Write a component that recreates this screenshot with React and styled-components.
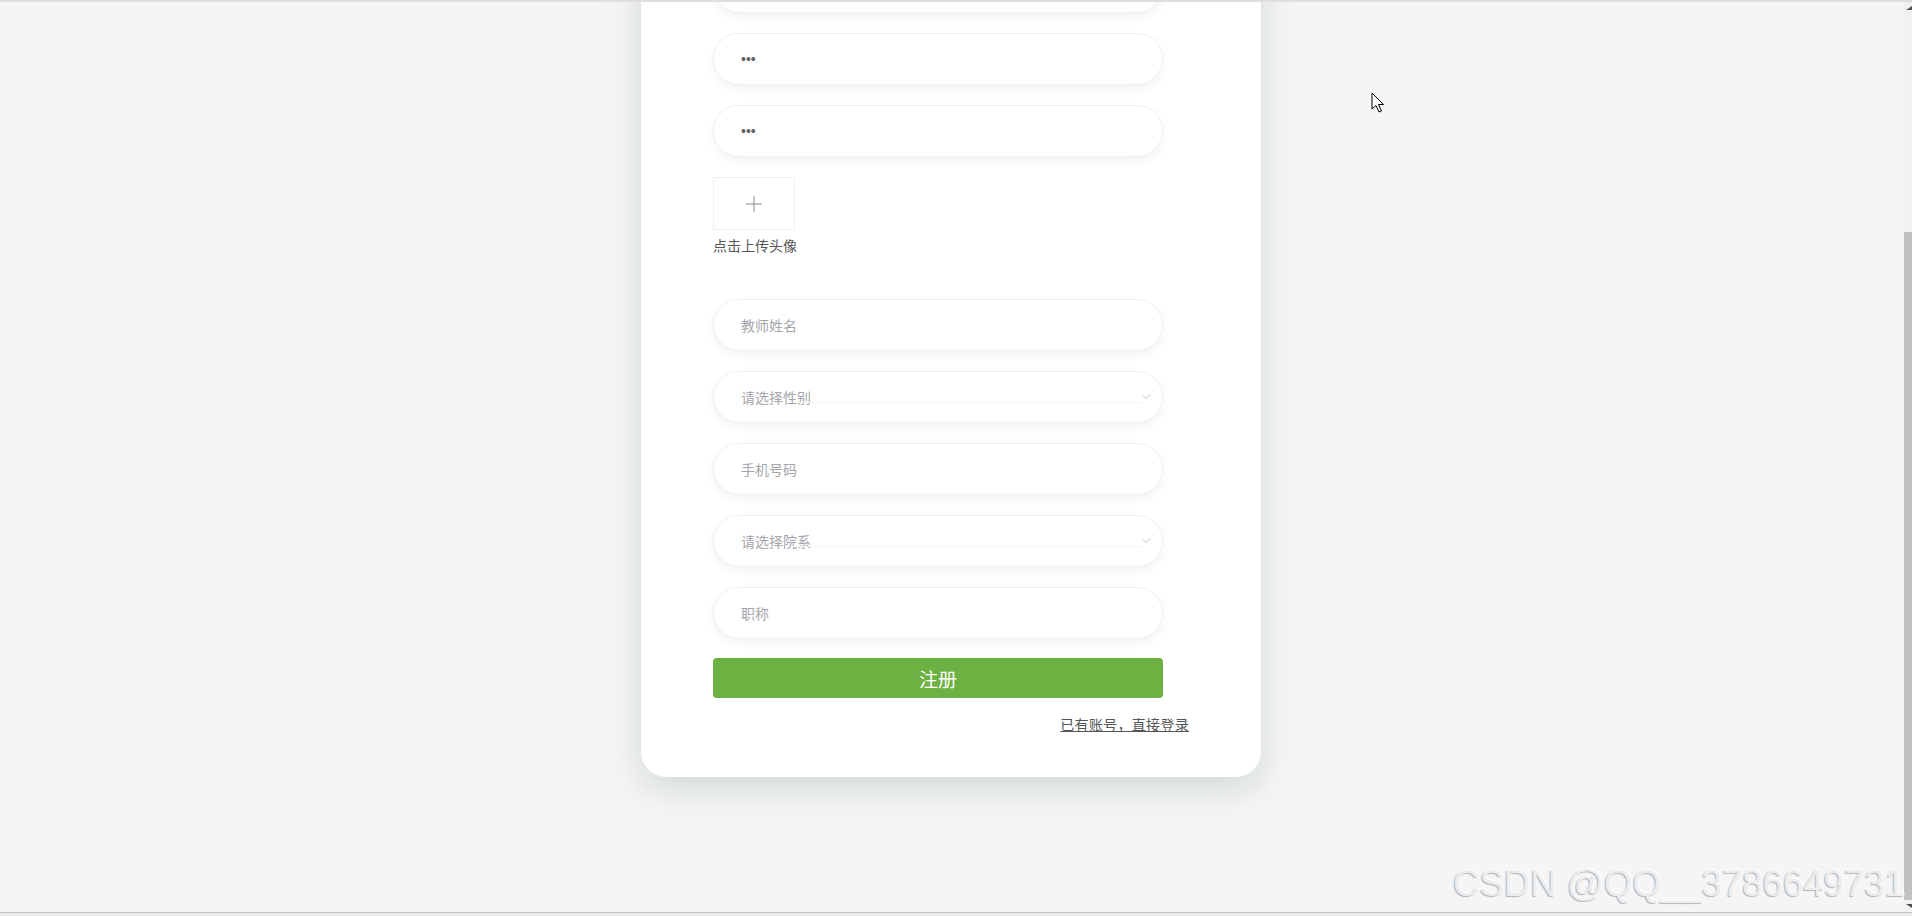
import styled, { createGlobalStyle } from "styled-components";

const GlobalStyle = createGlobalStyle`
  html, body {
    margin: 0;
    padding: 0;
    height: 100%;
    overflow: hidden;
  }
  body {
    font-family: "Noto Sans CJK SC", "Noto Sans", sans-serif;
  }
  * {
    box-sizing: border-box;
  }
`;

const Frame = styled.div`
  position: relative;
  display: flex;
  flex-direction: column;
  height: 100vh;
  border-top: 2px solid #dedede;
  background: #f5f5f5;
`;

const Body = styled.div`
  flex: 1;
  display: flex;
  min-height: 0;
`;

const Main = styled.main`
  flex: 1;
  display: flex;
  justify-content: center;
  align-items: flex-start;
  padding-right: 2px;
  overflow: hidden;
`;

const Card = styled.div`
  width: 620px;
  margin-top: -151px;
  padding: 40px 72px 43px;
  background: #fff;
  border-radius: 25px;
  box-shadow: 0 12px 34px rgba(95, 135, 120, 0.24);
`;

const CardHead = styled.div`
  height: 70px;
`;

const Field = styled.div`
  position: relative;
  width: 450px;
  height: 52px;
  margin-bottom: 20px;
`;

const Input = styled.input`
  width: 100%;
  height: 100%;
  padding: 0 27px;
  border: 1px solid #f1f1f1;
  border-radius: 26px;
  background: #fff;
  box-shadow: 0 4px 10px rgba(0, 0, 0, 0.05);
  font-family: ${({ type }) =>
    type === "password" ? '"Liberation Sans", Arial, sans-serif' : "inherit"};
  font-size: 14px;
  color: #606266;
  outline: none;

  &::placeholder {
    color: #a4a6ab;
  }
`;

const InnerLine = styled.span`
  position: absolute;
  left: 80px;
  right: 22px;
  bottom: 20px;
  border-bottom: 1px solid #f5f5f5;
  pointer-events: none;
`;

const Chevron = styled.svg`
  position: absolute;
  right: 12px;
  top: 22px;
  width: 10px;
  height: 7px;
  pointer-events: none;
`;

const Upload = styled.div`
  display: flex;
  flex-direction: column;
  align-items: flex-start;
  margin-bottom: 46px;
`;

const UploadBox = styled.div`
  display: flex;
  align-items: center;
  justify-content: center;
  width: 82px;
  height: 53px;
  border: 1px solid #efefef;
  background: #fff;
  cursor: pointer;
`;

const UploadLabel = styled.div`
  margin-top: 7px;
  line-height: 16px;
  font-size: 14px;
  color: #555;
`;

const SubmitButton = styled.button`
  display: block;
  width: 450px;
  height: 40px;
  margin-top: -1px;
  border: none;
  border-radius: 4px;
  background: #6db143;
  color: #fff;
  font-family: inherit;
  font-size: 19px;
  cursor: pointer;
`;

const LinkRow = styled.div`
  display: flex;
  justify-content: flex-end;
  margin-top: 16px;
  line-height: 20px;
`;

const LoginLink = styled.a`
  font-size: 14px;
  letter-spacing: 0.3px;
  color: #555;
  text-decoration: underline;
  cursor: pointer;
`;

const Scrollbar = styled.div`
  display: flex;
  flex-direction: column;
  width: 8px;
  background: #f1f1f1;
`;

const ScrollArrow = styled.div`
  height: 12px;
  display: flex;
  align-items: center;
  justify-content: flex-end;
`;

const ScrollTrack = styled.div`
  flex: 1;
  display: flex;
  flex-direction: column;
  padding-top: 218px;
`;

const ScrollThumb = styled.div`
  flex: 1;
  background: #c1c1c1;
`;

const BottomEdge = styled.div`
  height: 4px;
  border-top: 1px solid #c3c3c3;
  background: #ebebeb;
`;

const Watermark = styled.div`
  position: absolute;
  right: 7px;
  bottom: 12px;
  font-family: "Liberation Sans", Arial, sans-serif;
  font-size: 36.6px;
  line-height: 40px;
  color: #ededed;
  text-shadow: -1px 1px 1px #b4b4b4, 1px -1px 0 #fff;
  pointer-events: none;
  white-space: nowrap;
`;

const Cursor = styled.svg`
  position: absolute;
  left: 1371px;
  top: 90px;
  width: 14px;
  height: 22px;
  pointer-events: none;
`;

const SelectField = ({ placeholder }) => (
  <Field>
    <Input readOnly placeholder={placeholder} />
    <InnerLine />
    <Chevron viewBox="0 0 10 7">
      <path d="M1 1.5 L5 5.5 L9 1.5" fill="none" stroke="#c0c4cc" strokeWidth="1" />
    </Chevron>
  </Field>
);

const App = () => {
  return (
    <>
      <GlobalStyle />
      <Frame>
        <Body>
          <Main>
            <Card>
              <CardHead />
              <Field>
                <Input />
              </Field>
              <Field>
                <Input type="password" defaultValue="123" />
              </Field>
              <Field>
                <Input type="password" defaultValue="123" />
              </Field>
              <Upload>
                <UploadBox>
                  <svg width="18" height="18" viewBox="0 0 18 18">
                    <path d="M9 1 V17 M1 9 H17" stroke="#8c8c8c" strokeWidth="1" />
                  </svg>
                </UploadBox>
                <UploadLabel>点击上传头像</UploadLabel>
              </Upload>
              <Field>
                <Input placeholder="教师姓名" />
              </Field>
              <SelectField placeholder="请选择性别" />
              <Field>
                <Input placeholder="手机号码" />
              </Field>
              <SelectField placeholder="请选择院系" />
              <Field>
                <Input placeholder="职称" />
              </Field>
              <SubmitButton>注册</SubmitButton>
              <LinkRow>
                <LoginLink>已有账号，直接登录</LoginLink>
              </LinkRow>
            </Card>
          </Main>
          <Scrollbar>
            <ScrollArrow>
              <svg width="6" height="4" viewBox="0 0 6 4">
                <path d="M0 4 L6 4 L6 0 Z" fill="#505050" />
              </svg>
            </ScrollArrow>
            <ScrollTrack>
              <ScrollThumb />
            </ScrollTrack>
            <ScrollArrow>
              <svg width="6" height="4" viewBox="0 0 6 4">
                <path d="M0 0 L6 0 L6 4 Z" fill="#505050" />
              </svg>
            </ScrollArrow>
          </Scrollbar>
        </Body>
        <BottomEdge />
        <Watermark>CSDN @QQ__3786649731</Watermark>
        <Cursor viewBox="0 0 14 22">
          <path
            d="M1 1 L1 17 L5 13.5 L8 20 L10.5 19 L7.5 12.5 L12.5 12.5 Z"
            fill="#fff"
            stroke="#000"
            strokeWidth="1"
            strokeLinejoin="round"
          />
        </Cursor>
      </Frame>
    </>
  );
};

export default App;
